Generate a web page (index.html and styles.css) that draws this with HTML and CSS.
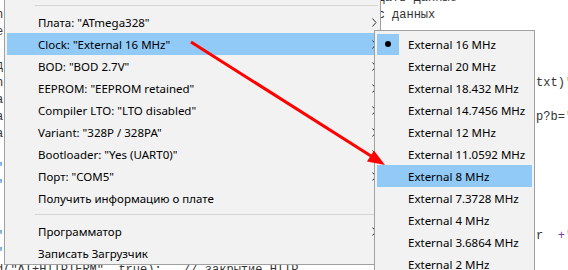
FILE: index.html
```html
<!DOCTYPE html>
<html lang="ru">
<head>
    <meta charset="UTF-8">
    <title>Инструменты</title>
    <link rel="stylesheet" href="styles.css">
</head>
<body>
    <!-- code of the sketch behind the open menus -->
    <div class="code">
        <div class="ln"><span class="edge"> </span><span class="c53">дать данные</span></div>
        <div class="ln"><span class="edge">n</span><span class="c53">с данных</span></div>
        <div class="ln"><span class="edge">e</span></div>
        <div class="ln"><span class="edge"> </span></div>
        <div class="ln"><span class="edge">д</span></div>
        <div class="ln"><span class="edge">n</span><span class="c75">txt)'</span></div>
        <div class="ln"><span class="edge">a</span></div>
        <div class="ln"><span class="edge">a</span><span class="c75">p?b='</span></div>
        <div class="ln"><span class="edge">a</span></div>
        <div class="ln"><span class="edge"> </span></div>
        <div class="ln"><span class="edge str">"</span></div>
        <div class="ln"><span class="edge str">"</span></div>
        <div class="ln"><span class="edge"> </span></div>
        <div class="ln"><span class="edge"> </span></div>
        <div class="ln"><span class="edge str">"</span><span class="c75">r  <span class="op">+'</span></span></div>
        <div class="ln"><span class="edge str">"</span></div>
        <div class="ln">d("AT+HTTPTERM", true);   // закрытие HTTP</div>
    </div>

    <!-- Tools menu -->
    <div class="menu main-menu">
        <div class="sep"></div>
        <div class="item">Плата: "ATmega328"<svg class="chev" width="5" height="9"><path d="M0.5 0.5 L4 4.5 L0.5 8.5"/></svg></div>
        <div class="item active">Clock: "External 16 MHz"<svg class="chev" width="5" height="9"><path d="M0.5 0.5 L4 4.5 L0.5 8.5"/></svg></div>
        <div class="item">BOD: "BOD 2.7V"<svg class="chev" width="5" height="9"><path d="M0.5 0.5 L4 4.5 L0.5 8.5"/></svg></div>
        <div class="item">EEPROM: "EEPROM retained"<svg class="chev" width="5" height="9"><path d="M0.5 0.5 L4 4.5 L0.5 8.5"/></svg></div>
        <div class="item">Compiler LTO: "LTO disabled"<svg class="chev" width="5" height="9"><path d="M0.5 0.5 L4 4.5 L0.5 8.5"/></svg></div>
        <div class="item">Variant: "328P / 328PA"<svg class="chev" width="5" height="9"><path d="M0.5 0.5 L4 4.5 L0.5 8.5"/></svg></div>
        <div class="item">Bootloader: "Yes (UART0)"<svg class="chev" width="5" height="9"><path d="M0.5 0.5 L4 4.5 L0.5 8.5"/></svg></div>
        <div class="item">Порт: "COM5"<svg class="chev" width="5" height="9"><path d="M0.5 0.5 L4 4.5 L0.5 8.5"/></svg></div>
        <div class="item">Получить информацию о плате</div>
        <div class="sep sep-low"></div>
        <div class="item">Программатор<svg class="chev" width="5" height="9"><path d="M0.5 0.5 L4 4.5 L0.5 8.5"/></svg></div>
        <div class="item">Записать Загрузчик</div>
    </div>

    <!-- Clock submenu -->
    <div class="menu sub-menu">
        <div class="opt"><span class="tick checked"><span class="dot"></span></span>External 16 MHz</div>
        <div class="opt"><span class="tick"></span>External 20 MHz</div>
        <div class="opt"><span class="tick"></span>External 18.432 MHz</div>
        <div class="opt"><span class="tick"></span>External 14.7456 MHz</div>
        <div class="opt"><span class="tick"></span>External 12 MHz</div>
        <div class="opt"><span class="tick"></span>External 11.0592 MHz</div>
        <div class="opt active"><span class="tick"></span>External 8 MHz</div>
        <div class="opt"><span class="tick"></span>External 7.3728 MHz</div>
        <div class="opt"><span class="tick"></span>External 4 MHz</div>
        <div class="opt"><span class="tick"></span>External 3.6864 MHz</div>
        <div class="opt"><span class="tick"></span>External 2 MHz</div>
    </div>

    <!-- red pointer drawn over the screenshot -->
    <svg class="pointer" width="568" height="270" viewBox="0 0 568 270">
        <line x1="191" y1="42" x2="371" y2="156" stroke="#ff0000" stroke-width="3"/>
        <polygon points="385,165 367,161.5 374,150.5" fill="#ff0000"/>
    </svg>
</body>
</html>
```

FILE: styles.css
```css
html, body {
    margin: 0;
    width: 568px;
    height: 270px;
    overflow: hidden;
    background-color: #ffffff;
}
.code {
    margin: -10px 0 0 -4px;
    font-family: "Liberation Mono", monospace;
    font-size: 12px;
    line-height: 17px;
    color: #333333;
}
.ln {
    height: 17px;
    white-space: pre;
}
.edge {
    display: inline-block;
    width: 1ch;
}
.str {
    color: #2a7fd4;
}
.op {
    color: #7a3e9d;
}
.c53 {
    margin-left: 52ch;
}
.c75 {
    margin-left: 74ch;
}
.menu {
    position: absolute;
    box-sizing: border-box;
    padding: 2px;
    background-color: #f2f2f2;
    border: 1px solid #a0a0a0;
    font-family: "Noto Sans", sans-serif;
    font-size: 11.5px;
    color: #000000;
}
.main-menu {
    left: 4px;
    top: -4px;
    width: 377px;
    height: 269px;
}
.sub-menu {
    left: 374px;
    top: 30px;
    width: 161px;
}
.sep {
    margin-left: 28px;
    padding: 6px 0 5px 0;
}
.sep::after {
    content: "";
    display: block;
    height: 1px;
    background-color: #d4d4d4;
}
.sep-low {
    padding: 5px 0 5px 0;
}
.item {
    display: flex;
    align-items: center;
    justify-content: space-between;
    height: 22px;
    padding: 0 1px 0 31px;
}
.item.active, .opt.active {
    background-color: #91c9f7;
}
.chev {
    fill: none;
    stroke: #333333;
    stroke-width: 1;
}
.opt {
    display: flex;
    align-items: center;
    height: 22px;
}
.tick {
    display: flex;
    align-items: center;
    justify-content: center;
    width: 22px;
    height: 21px;
    margin-right: 9px;
}
.tick.checked {
    background-color: #91c9f7;
}
.dot {
    width: 6px;
    height: 6px;
    border-radius: 50%;
    background-color: #000000;
}
.pointer {
    position: absolute;
    left: 0;
    top: 0;
    pointer-events: none;
}
```
